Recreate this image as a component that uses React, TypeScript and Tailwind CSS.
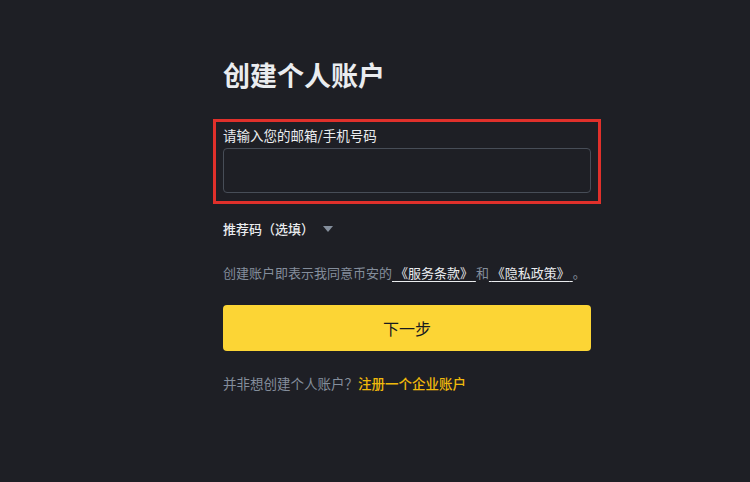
import React from "react";

const font = { fontFamily: '"Noto Sans CJK SC", "Noto Sans", sans-serif' };

export default function App() {
  return (
    <div
      className="min-h-[482px] w-[750px] bg-[#1e1f25] pl-[223px] pt-[58px]"
      style={font}
    >
      <div className="w-[368px]">
        <h1 className="text-[27px] font-bold leading-[34px] text-[#eaecef]">
          创建个人账户
        </h1>

        {/* 邮箱输入，红框标注 */}
        <div className="relative mt-[33px]">
          <div className="pointer-events-none absolute -left-[10px] -right-[10px] -top-[6px] -bottom-[11px] border-[3px] border-[#e0302b]" />
          <label className="block text-[13.5px] leading-[20px] text-[#eaecef]">
            请输入您的邮箱/手机号码
          </label>
          <input
            className="mt-[3px] block h-[45px] w-full rounded-[4px] border border-[#474d57] bg-transparent px-3 text-[14px] text-[#eaecef] outline-none"
            type="text"
          />
        </div>

        <div className="mt-[26px] flex items-center gap-[9px] text-[13px] font-medium leading-[20px] text-[#eaecef]">
          <span>推荐码（选填）</span>
          <span className="h-0 w-0 border-x-[5px] border-t-[6px] border-x-transparent border-t-[#848e9c]" />
        </div>

        <p className="mt-[24px] text-[13px] leading-[20px] text-[#848e9c]">
          创建账户即表示我同意币安的
          <a className="text-[#eaecef] underline underline-offset-[3px]">
            {" "}《服务条款》{" "}
          </a>
          和
          <a className="text-[#eaecef] underline underline-offset-[3px]">
            {" "}《隐私政策》{" "}
          </a>
          。
        </p>

        <button className="mt-[22px] flex h-[46px] w-full items-center justify-center rounded-[4px] bg-[#fcd535] text-[16px] text-[#181a20]">
          下一步
        </button>

        <p className="mt-[22px] text-[13.5px] leading-[20px] text-[#848e9c]">
          并非想创建个人账户？
          <a className="font-medium text-[#f0b90b]">注册一个企业账户</a>
        </p>
      </div>
    </div>
  );
}
